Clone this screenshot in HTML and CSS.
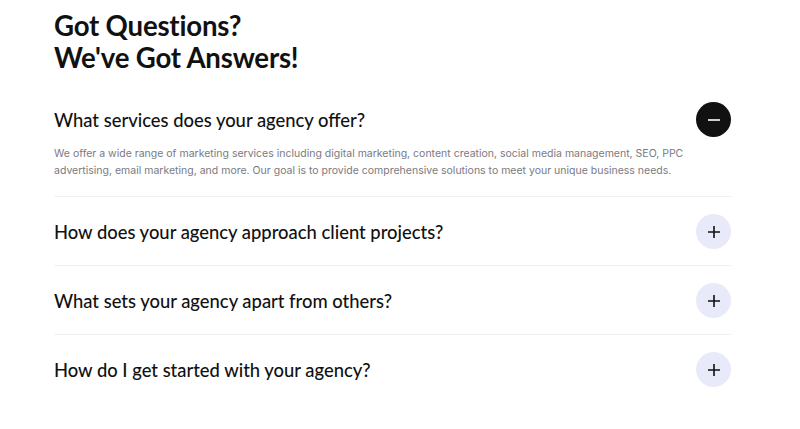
FILE: index.html
```html
<!DOCTYPE html>
<html lang="en">
<head>
  <meta charset="UTF-8">
  <title>FAQ</title>
  <link rel="stylesheet" href="styles.css">
</head>
<body>
  <section class="faq">
    <h2 class="faq-title">Got Questions?<br>We've Got Answers!</h2>

    <div class="faq-list">
      <!-- Abierto -->
      <div class="faq-item open">
        <div class="faq-head">
          <span class="faq-q">What services does your agency offer?</span>
          <span class="faq-btn">
            <svg width="14" height="14" viewBox="0 0 14 14"><path d="M1 7h12" stroke="#fff" stroke-width="1.6"/></svg>
          </span>
        </div>
        <p class="faq-a">We offer a wide range of marketing services including digital marketing, content creation, social media management, SEO, PPC advertising, email marketing, and more. Our goal is to provide comprehensive solutions to meet your unique business needs.</p>
      </div>

      <div class="faq-item">
        <div class="faq-head">
          <span class="faq-q">How does your agency approach client projects?</span>
          <span class="faq-btn">
            <svg width="14" height="14" viewBox="0 0 14 14"><path d="M1 7h12M7 1v12" stroke="#111" stroke-width="1.6"/></svg>
          </span>
        </div>
      </div>

      <div class="faq-item">
        <div class="faq-head">
          <span class="faq-q">What sets your agency apart from others?</span>
          <span class="faq-btn">
            <svg width="14" height="14" viewBox="0 0 14 14"><path d="M1 7h12M7 1v12" stroke="#111" stroke-width="1.6"/></svg>
          </span>
        </div>
      </div>

      <div class="faq-item">
        <div class="faq-head">
          <span class="faq-q">How do I get started with your agency?</span>
          <span class="faq-btn">
            <svg width="14" height="14" viewBox="0 0 14 14"><path d="M1 7h12M7 1v12" stroke="#111" stroke-width="1.6"/></svg>
          </span>
        </div>
      </div>
    </div>
  </section>

  <script>
    // Abrir / cerrar preguntas
    document.querySelectorAll(".faq-head").forEach(head => {
      head.addEventListener("click", function () {
        this.parentElement.classList.toggle("open");
      });
    });
  </script>
</body>
</html>
```

FILE: styles.css
```css
body {
  margin: 0;
  background-color: #ffffff;
  font-family: "Lato", "Inter", sans-serif;
  color: #111111;
}
.faq {
  padding: 10px 69px 0 54px;
}
.faq-title {
  margin: 0 0 11px;
  font-size: 27.6px;
  line-height: 32px;
  font-weight: 700;
  letter-spacing: -0.2px;
}
.faq-item {
  border-bottom: 1px solid #f0f1f4;
}
.faq-item:last-child {
  border-bottom: none;
}
.faq-head {
  display: flex;
  align-items: center;
  justify-content: space-between;
  padding: 17px 0 16px;
  cursor: pointer;
}
.faq-q {
  font-size: 18.4px;
  font-weight: 500;
}
.faq-btn {
  display: flex;
  align-items: center;
  justify-content: center;
  width: 35px;
  height: 35px;
  border-radius: 50%;
  background-color: #e8eafa;
}
.faq-item.open .faq-btn {
  background-color: #111111;
}
.faq-a {
  display: none;
  margin: -8px 0 0;
  padding-bottom: 17px;
  font-family: "Inter", sans-serif;
  font-size: 10.5px;
  line-height: 17px;
  color: #7a7a82;
}
.faq-item.open .faq-a {
  display: block;
}
```
